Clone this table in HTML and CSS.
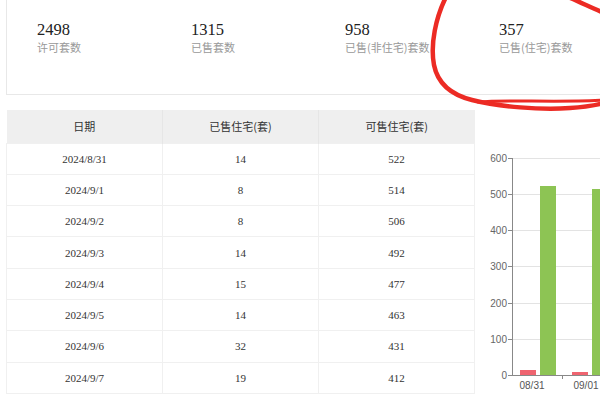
FILE: index.html
```html
<!DOCTYPE html>
<html lang="zh">
<head>
<meta charset="utf-8">
<link rel="stylesheet" href="styles.css">
</head>
<body>
<div class="page">
  <section class="summary">
    <div class="stat"><div class="num">2498</div><div class="label">许可套数</div></div>
    <div class="stat"><div class="num">1315</div><div class="label">已售套数</div></div>
    <div class="stat"><div class="num">958</div><div class="label">已售(非住宅)套数</div></div>
    <div class="stat"><div class="num">357</div><div class="label">已售(住宅)套数</div></div>
  </section>
  <section class="main">
    <div class="table-box">
      <table class="data">
        <thead>
          <tr><th>日期</th><th>已售住宅(套)</th><th>可售住宅(套)</th></tr>
        </thead>
        <tbody>
          <tr><td>2024/8/31</td><td>14</td><td>522</td></tr>
          <tr><td>2024/9/1</td><td>8</td><td>514</td></tr>
          <tr><td>2024/9/2</td><td>8</td><td>506</td></tr>
          <tr><td>2024/9/3</td><td>14</td><td>492</td></tr>
          <tr><td>2024/9/4</td><td>15</td><td>477</td></tr>
          <tr><td>2024/9/5</td><td>14</td><td>463</td></tr>
          <tr><td>2024/9/6</td><td>32</td><td>431</td></tr>
          <tr><td>2024/9/7</td><td>19</td><td>412</td></tr>
        </tbody>
      </table>
    </div>
    <div class="chart">
      <svg class="chart-svg" width="125" height="285" viewBox="0 0 125 285">
        <g stroke="#e3e3e3" stroke-width="1">
          <line x1="37" y1="48.5" x2="125" y2="48.5"/>
          <line x1="37" y1="84.5" x2="125" y2="84.5"/>
          <line x1="37" y1="120.5" x2="125" y2="120.5"/>
          <line x1="37" y1="156.5" x2="125" y2="156.5"/>
          <line x1="37" y1="193.5" x2="125" y2="193.5"/>
          <line x1="37" y1="229.5" x2="125" y2="229.5"/>
        </g>
        <g stroke="#888" stroke-width="1">
          <line x1="33" y1="48.5" x2="37" y2="48.5"/>
          <line x1="33" y1="84.5" x2="37" y2="84.5"/>
          <line x1="33" y1="120.5" x2="37" y2="120.5"/>
          <line x1="33" y1="156.5" x2="37" y2="156.5"/>
          <line x1="33" y1="193.5" x2="37" y2="193.5"/>
          <line x1="33" y1="229.5" x2="37" y2="229.5"/>
          <line x1="33" y1="265.5" x2="37" y2="265.5"/>
          <line x1="87.5" y1="265" x2="87.5" y2="269"/>
        </g>
        <g font-family="Liberation Sans, Arial, sans-serif" font-size="10" fill="#666" text-anchor="end">
          <text x="32" y="52">600</text>
          <text x="32" y="88">500</text>
          <text x="32" y="124">400</text>
          <text x="32" y="160">300</text>
          <text x="32" y="197">200</text>
          <text x="32" y="233">100</text>
          <text x="32" y="269">0</text>
        </g>
        <rect x="45" y="260" width="16" height="5" fill="#ef6470"/>
        <rect x="65" y="76" width="16" height="189" fill="#8dc454"/>
        <rect x="97" y="262" width="16" height="3" fill="#ef6470"/>
        <rect x="117" y="79" width="16" height="186" fill="#8dc454"/>
        <line x1="37" y1="265.5" x2="125" y2="265.5" stroke="#888" stroke-width="1"/>
        <line x1="37.5" y1="48" x2="37.5" y2="266" stroke="#888" stroke-width="1"/>
        <g font-family="Liberation Sans, Arial, sans-serif" font-size="10" fill="#555" text-anchor="middle">
          <text x="57" y="279">08/31</text>
          <text x="111" y="279">09/01</text>
        </g>
      </svg>
    </div>
  </section>
  <svg class="scribble" width="600" height="395" viewBox="0 0 600 395">
    <path d="M446 -2 C 436 18, 430 45, 434 66 C 438 86, 452 96, 472 101 C 500 108, 540 111, 570 109 C 585 108, 596 106, 604 104" fill="none" stroke="#ec2b24" stroke-width="4.5" stroke-linecap="round"/>
    <path d="M478 103 C 510 100, 550 104, 604 101" fill="none" stroke="#ec2b24" stroke-width="3" stroke-linecap="round"/>
    <path d="M568 -2 C 580 3, 592 9, 604 14" fill="none" stroke="#ec2b24" stroke-width="4.5" stroke-linecap="round"/>
  </svg>
</div>
</body>
</html>
```
FILE: styles.css
```css
* { box-sizing: border-box; }
html, body { margin: 0; padding: 0; background: #fff; }
body { width: 600px; height: 395px; overflow: hidden; font-family: "Liberation Serif", "Times New Roman", "Noto Sans CJK SC", serif; color: #333; }
.page { position: relative; width: 600px; height: 395px; }

.summary {
  margin-left: 6px;
  width: 640px;
  height: 96px;
  margin-top: -1px;
  border: 1px solid #e8e8e8;
  display: grid;
  grid-template-columns: repeat(4, 154px);
  padding-left: 30px;
  padding-top: 21px;
}
.stat .num { font-size: 16.5px; line-height: 18px; color: #222; }
.stat .label { font-family: "Noto Sans CJK SC", sans-serif; font-size: 11px; line-height: 14px; color: #999; margin-top: 1px; }

.main { display: flex; margin-top: 15px; }
.table-box { margin-left: 6px; width: 469px; flex: none; }
.data { width: 469px; border-collapse: collapse; table-layout: fixed; }
.data th {
  background: #efefef;
  height: 33px;
  font-family: "Noto Sans CJK SC", sans-serif;
  font-weight: normal;
  font-size: 11px;
  color: #333;
  border-right: 1px solid #e6e6e6;
  padding: 0;
}
.data td {
  height: 31.3px;
  text-align: center;
  font-size: 11px;
  color: #333;
  border: 1px solid #f0f0f0;
  padding: 0;
}
.data th:last-child { border-right: none; }
.chart { flex: 1; position: relative; }
.chart-svg { display: block; }

.scribble { position: absolute; left: 0; top: 0; pointer-events: none; }
```
